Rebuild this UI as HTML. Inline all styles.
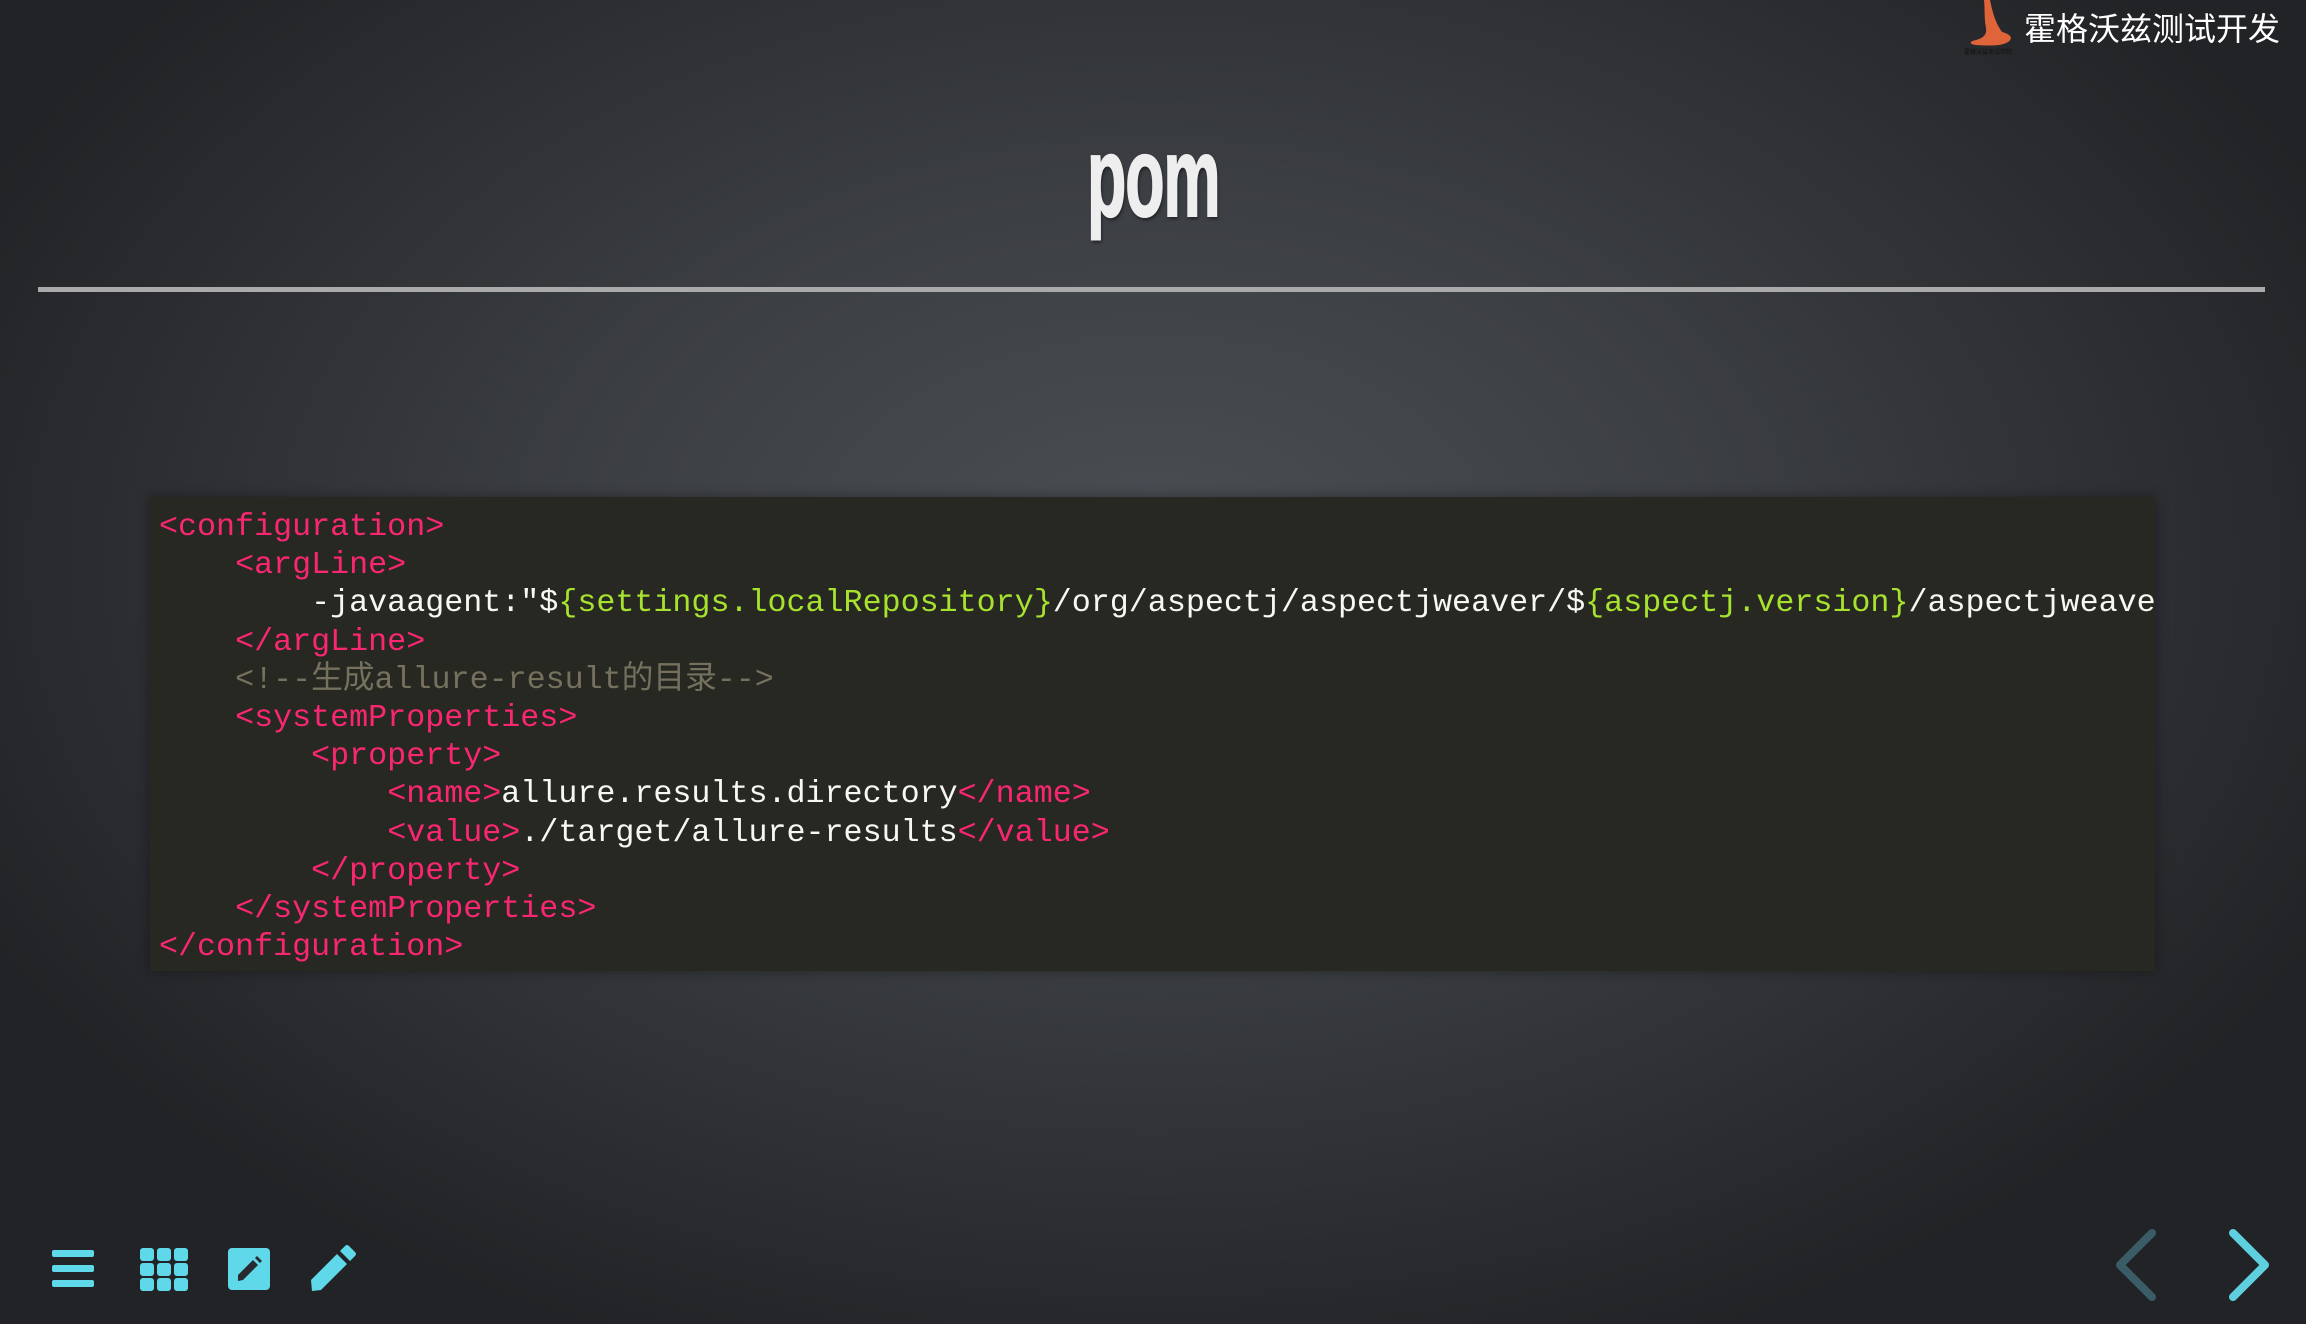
<!DOCTYPE html>
<html><head><meta charset="utf-8"><style>
html,body{margin:0;padding:0}
body{width:2306px;height:1324px;overflow:hidden;position:relative;
background:radial-gradient(ellipse 1300px 850px at 1153px 560px,#4b4f54 0%,#3b3e42 45%,#222326 100%);
font-family:"Liberation Sans","Noto Sans CJK SC",sans-serif}
.logo{position:absolute;left:2024px;top:4px;color:#fff;font-size:32px;letter-spacing:0px;white-space:nowrap}
.title{position:absolute;left:0;width:2306px;top:112px;text-align:center}
.title span{display:inline-block;font-family:"Liberation Sans Narrow","Liberation Sans",sans-serif;font-weight:bold;font-size:113px;color:#eee;transform:scaleX(0.57);text-shadow:2px 3px 4px rgba(0,0,0,.5);letter-spacing:-2px;-webkit-text-stroke:2px #eee}
.rule{position:absolute;left:38px;top:287px;width:2227px;height:5px;background:#aaa}
.code{position:absolute;left:150px;top:497px;width:2005px;height:474px;background:#272822;box-shadow:0 0 12px rgba(0,0,0,.35);overflow:hidden}
pre{margin:0;position:absolute;left:9px;top:11px;font-family:"Liberation Mono","Noto Sans CJK SC",monospace;font-size:31.7px;line-height:38.2px;color:#f8f8f2;white-space:pre}
.t{color:#f92672}.g{color:#a6e22e}.c{color:#75715e}
.ic{position:absolute}
</style></head><body>
<svg class="ic" style="left:1958px;top:0" width="70" height="58" viewBox="0 0 70 58">
<path d="M26 0 C27 8 26 18 28 28 C29 34 26 38 18 40 C12 41 10 44 18 45 C32 46 44 46 50 42 C56 38 52 34 44 32 C40 26 36 20 32 0 Z" fill="#e0643a"/>
<text x="6" y="54" font-size="6" fill="#111">霍格沃兹测试学院</text>
</svg>
<div class="logo">霍格沃兹测试开发</div>
<div class="title"><span>pom</span></div>
<div class="rule"></div>
<div class="code"><pre><span class="t">&lt;configuration&gt;</span>
    <span class="t">&lt;argLine&gt;</span>
        -javaagent:"$<span class="g">{settings.localRepository}</span>/org/aspectj/aspectjweaver/$<span class="g">{aspectj.version}</span>/aspectjweaver-$<span class="g">{aspectj.version}</span>.jar"
    <span class="t">&lt;/argLine&gt;</span>
    <span class="c">&lt;!--生成allure-result的目录--&gt;</span>
    <span class="t">&lt;systemProperties&gt;</span>
        <span class="t">&lt;property&gt;</span>
            <span class="t">&lt;name&gt;</span>allure.results.directory<span class="t">&lt;/name&gt;</span>
            <span class="t">&lt;value&gt;</span>./target/allure-results<span class="t">&lt;/value&gt;</span>
        <span class="t">&lt;/property&gt;</span>
    <span class="t">&lt;/systemProperties&gt;</span>
<span class="t">&lt;/configuration&gt;</span></pre></div>
<svg class="ic" style="left:50px;top:1248px" width="45" height="42"><g fill="#5fd8ea"><rect x="2" y="2" width="42" height="7" rx="2"/><rect x="2" y="17" width="42" height="7" rx="2"/><rect x="2" y="32" width="42" height="7" rx="2"/></g></svg>
<svg class="ic" style="left:139px;top:1247px" width="50" height="46"><g fill="#5fd8ea"><rect x="1" y="1" width="14" height="13" rx="3"/><rect x="18" y="1" width="14" height="13" rx="3"/><rect x="35" y="1" width="14" height="13" rx="3"/><rect x="1" y="16" width="14" height="13" rx="3"/><rect x="18" y="16" width="14" height="13" rx="3"/><rect x="35" y="16" width="14" height="13" rx="3"/><rect x="1" y="31" width="14" height="13" rx="3"/><rect x="18" y="31" width="14" height="13" rx="3"/><rect x="35" y="31" width="14" height="13" rx="3"/></g></svg>
<svg class="ic" style="left:227px;top:1247px" width="44" height="44"><rect x="1" y="1" width="42" height="42" rx="4" fill="#5fd8ea"/><path d="M11 34 L11 28 L26 13 L31 18 L16 33 Z M28 11 L30 9 L35 14 L33 16 Z" fill="#272a2e"/></svg>
<svg class="ic" style="left:309px;top:1244px" width="50" height="50"><path d="M2 36 L28 10 L38 20 L12 46 L3 47 Z M31 7 L36 2 Q38 0 40 2 L46 8 Q48 10 46 12 L41 17 Z" fill="#5fd8ea"/></svg>
<svg class="ic" style="left:2090px;top:1225px" width="190" height="80"><path d="M62 8 L30 40 L62 72" fill="none" stroke="#3a5c66" stroke-width="8" stroke-linecap="round" stroke-linejoin="round"/><path d="M143 8 L175 40 L143 72" fill="none" stroke="#5fd0e0" stroke-width="8" stroke-linecap="round" stroke-linejoin="round"/></svg>
</body></html>
